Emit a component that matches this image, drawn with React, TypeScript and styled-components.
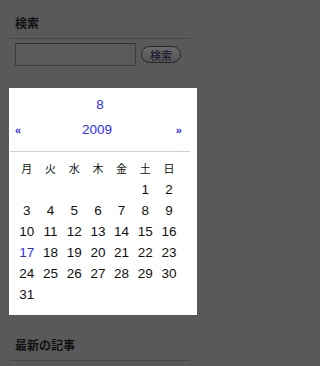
import React from "react";
import styled, { createGlobalStyle } from "styled-components";

const GlobalStyle = createGlobalStyle`
  html, body {
    margin: 0;
    padding: 0;
    background: #595959;
  }
  body {
    font-family: "Liberation Sans", "Noto Sans CJK JP", sans-serif;
  }
`;

const Sidebar = styled.div`
  width: 180px;
  padding: 16px 0 0 10px;
`;

const Heading = styled.h2`
  margin: 0;
  padding: 0 5px 6px;
  font-family: "Liberation Sans", "Noto Sans CJK JP", sans-serif;
  font-size: 12px;
  font-weight: bold;
  line-height: 16px;
  color: #111;
  border-bottom: 1px solid #464646;
`;

const SearchForm = styled.form`
  display: flex;
  align-items: center;
  gap: 5px;
  margin: 4px 0 0;
  padding-left: 5px;
`;

const SearchInput = styled.input`
  box-sizing: border-box;
  width: 121px;
  height: 23px;
  margin: 0;
  background: #5a5a5a;
  border: 1px solid #3e3e3e;
  border-top-color: #333;
`;

const SearchButton = styled.button`
  box-sizing: border-box;
  width: 40px;
  height: 17px;
  padding: 0;
  border: 1px solid #262626;
  border-radius: 9px;
  background: linear-gradient(#6a6a6a, #555);
  font-family: "Noto Sans CJK JP", sans-serif;
  font-size: 11px;
  line-height: 14px;
  color: #15152e;
`;

const CalendarPanel = styled.div`
  width: 188px;
  margin: 22px 0 0 -1px;
  padding: 9px 0 10px 1px;
  box-sizing: border-box;
  background: #fff;
`;

const CalendarInner = styled.div`
  width: 180px;
`;

const MonthLine = styled.div`
  text-align: center;
  font-size: 13.5px;
  line-height: 16px;
  color: #2b2bff;
`;

const YearRow = styled.div`
  display: flex;
  align-items: center;
  justify-content: space-between;
  margin-top: 9px;
  padding: 0 8px 13px 5px;
  height: 16px;
  border-bottom: 1px solid #cfcfcf;
`;

const NavLink = styled.a`
  font-size: 11px;
  font-weight: bold;
  line-height: 16px;
  color: #2b2bff;
  text-decoration: none;
`;

const YearText = styled.span`
  font-size: 13.5px;
  line-height: 16px;
  color: #2b2bff;
  margin-left: -3px;
`;

const DayGrid = styled.div`
  display: grid;
  grid-template-columns: repeat(7, 23.7px);
  grid-auto-rows: 21px;
  margin: 6px 0 0 5px;
`;

const DayName = styled.div`
  text-align: center;
  font-family: "Noto Sans CJK JP", sans-serif;
  font-size: 11px;
  line-height: 21px;
  color: #111;
`;

const DayCell = styled.div<{ $today?: boolean }>`
  text-align: center;
  font-size: 13.5px;
  line-height: 21px;
  color: ${({ $today }) => ($today ? "#2b2bff" : "#111")};
`;

const BottomHeading = styled(Heading)`
  margin-top: 23px;
`;

const dayNames = ["月", "火", "水", "木", "金", "土", "日"];
const offset = 5;
const daysInMonth = 31;
const today = 17;

const App = (): JSX.Element => {
  const cells: (number | null)[] = [];
  for (let i = 0; i < offset; i++) cells.push(null);
  for (let d = 1; d <= daysInMonth; d++) cells.push(d);

  return (
    <>
      <GlobalStyle />
      <Sidebar>
        <Heading>検索</Heading>
        <SearchForm onSubmit={(e) => e.preventDefault()}>
          <SearchInput type="text" />
          <SearchButton type="submit">検索</SearchButton>
        </SearchForm>

        <CalendarPanel>
          <CalendarInner>
            <MonthLine>8</MonthLine>
            <YearRow>
              <NavLink href="#">«</NavLink>
              <YearText>2009</YearText>
              <NavLink href="#">»</NavLink>
            </YearRow>
            <DayGrid>
              {dayNames.map((n) => (
                <DayName key={n}>{n}</DayName>
              ))}
              {cells.map((d, i) => (
                <DayCell key={i} $today={d === today}>
                  {d ?? ""}
                </DayCell>
              ))}
            </DayGrid>
          </CalendarInner>
        </CalendarPanel>

        <BottomHeading>最新の記事</BottomHeading>
      </Sidebar>
    </>
  );
};

export default App;
